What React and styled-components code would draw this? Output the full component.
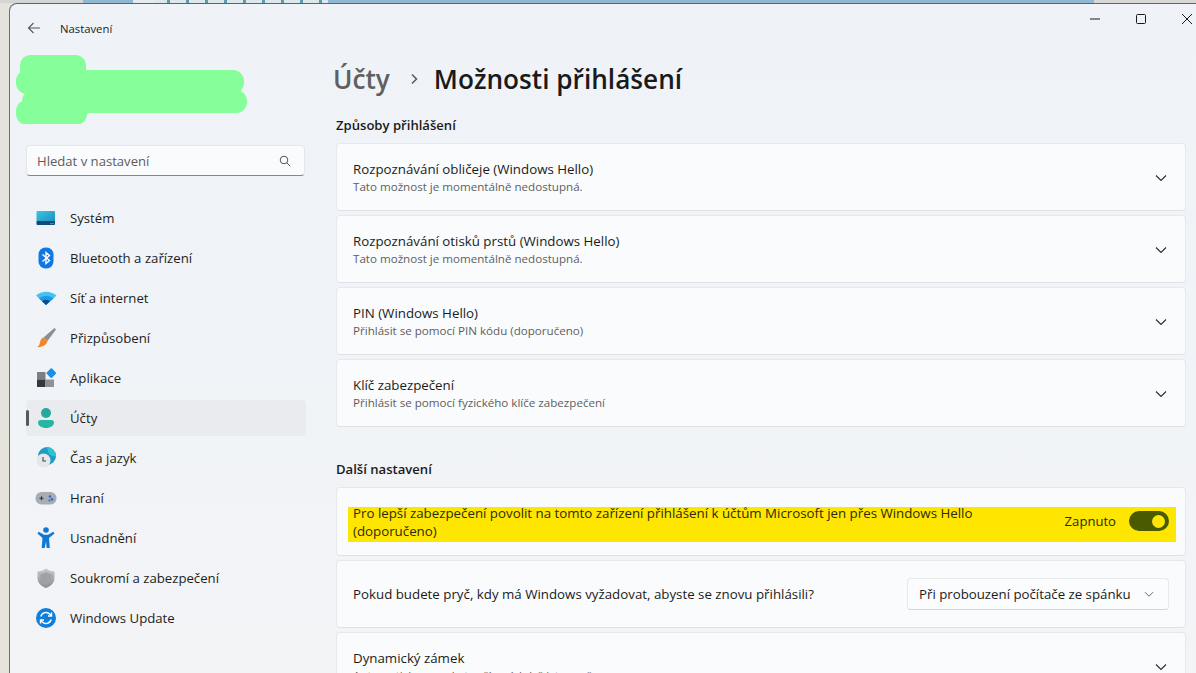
import React from 'react';
import styled, { createGlobalStyle } from 'styled-components';

const GlobalStyle = createGlobalStyle`
  html, body {
    margin: 0;
    padding: 0;
    height: 100%;
    overflow: hidden;
  }
  body {
    font-family: "Open Sans", "Liberation Sans", sans-serif;
    background: #e6e2dc;
    color: #1b1b1b;
  }
`;

const Desktop = styled.div`
  width: 1196px;
  height: 673px;
  overflow: hidden;
  display: flex;
  flex-direction: column;
`;

const WallpaperStrip = styled.div`
  display: flex;
  height: 3px;
  flex: none;
`;

const StripPart = styled.div`
  width: ${({ w }) => (w ? `${w}px` : 'auto')};
  flex: ${({ w }) => (w ? 'none' : '1')};
  background: ${({ c }) => c};
`;

const Window = styled.div`
  flex: 1;
  min-height: 0;
  margin-left: 9px;
  display: flex;
  background: linear-gradient(180deg, #eff3f8 0%, #f0f3f7 55%, #f3f4f6 100%);
  border-top: 1px solid #5f6468;
  border-left: 1px solid #6c7074;
  border-top-left-radius: 8px;
  overflow: hidden;
`;

const Sidebar = styled.aside`
  width: 317px;
  flex: none;
  padding-left: 16px;
  box-sizing: border-box;
`;

const TitleBar = styled.div`
  display: flex;
  align-items: center;
  height: 48px;
`;

const BackButton = styled.div`
  width: 34px;
  display: flex;
`;

const AppName = styled.span`
  font-size: 11.3px;
  color: #1c1c1c;
`;

const Redaction = styled.svg`
  display: block;
  margin-left: -10px;
  width: 236px;
  height: 72px;
`;

const SearchBox = styled.div`
  margin-top: 21px;
  width: 279px;
  height: 31px;
  box-sizing: border-box;
  display: flex;
  align-items: center;
  justify-content: space-between;
  padding: 0 13px 0 10px;
  background: #fafbfc;
  border: 1px solid #e4e6e9;
  border-bottom: 1px solid #85888b;
  border-radius: 4px;
  font-size: 13.1px;
  color: #5d5d5d;
`;

const NavList = styled.nav`
  margin-top: 24px;
  display: flex;
  flex-direction: column;
  gap: 4px;
  width: 280px;
`;

const NavItem = styled.div`
  position: relative;
  height: 36px;
  display: flex;
  align-items: center;
  gap: 12px;
  padding-left: 8px;
  border-radius: 4px;
  font-size: 13.2px;
  color: #1d1d1d;
  background: ${({ active }) => (active ? '#e9ebee' : 'transparent')};
`;

const ActiveMark = styled.span`
  position: absolute;
  left: 0;
  top: 10px;
  width: 3px;
  height: 16px;
  border-radius: 2px;
  background: #55595c;
`;

const NavIcon = styled.svg`
  width: 24px;
  height: 24px;
  flex: none;
`;

const Main = styled.main`
  flex: 1;
  min-width: 0;
  display: flex;
  flex-direction: column;
`;

const WindowControls = styled.div`
  display: flex;
  justify-content: flex-end;
  height: 32px;
  flex: none;
  margin-right: -14px;
`;

const ControlButton = styled.div`
  width: 46px;
  height: 30px;
  display: flex;
  align-items: center;
  justify-content: center;
`;

const Content = styled.div`
  padding: 0 10px 0 9px;
`;

const Breadcrumb = styled.h1`
  margin: 19px 0 0 -3px;
  height: 48px;
  display: flex;
  align-items: center;
  font-size: 26.2px;
  font-weight: 600;
  color: #1a1a1a;
  white-space: nowrap;
`;

const Crumb = styled.span`
  color: #5e6062;
`;

const CrumbSep = styled.svg`
  width: 12px;
  height: 12px;
  margin: 0 14px 0 18px;
`;

const SectionTitle = styled.h2`
  margin: ${({ first }) => (first ? '12px' : '32px')} 0 0 0;
  height: 20px;
  line-height: 20px;
  font-size: 13.1px;
  font-weight: 600;
  color: #1a1a1a;
`;

const CardStack = styled.div`
  margin-top: 8px;
  display: flex;
  flex-direction: column;
  gap: 4px;
`;

const Card = styled.div`
  height: ${({ h }) => h || 68}px;
  box-sizing: border-box;
  flex: none;
  display: flex;
  align-items: center;
  justify-content: space-between;
  padding: ${({ tight }) => (tight ? '0 9px 0 11px' : '0 16px')};
  background: #f9fbfc;
  border: 1px solid #e6e9ec;
  border-bottom-color: #dfe2e5;
  border-radius: 4px;
`;

const CardText = styled.div`
  display: flex;
  flex-direction: column;
`;

const CardTitle = styled.div`
  font-size: 13.3px;
  line-height: 18px;
  color: #1b1b1b;
`;

const CardSub = styled.div`
  font-size: 11.6px;
  line-height: 17px;
  color: #5f5f5f;
`;

const Chevron = styled.svg`
  width: 14px;
  height: 14px;
  flex: none;
  margin-right: 1px;
  margin-top: 1px;
`;

const Highlight = styled.div`
  flex: 1;
  height: 35px;
  margin-top: 6px;
  display: flex;
  align-items: center;
  justify-content: space-between;
  padding: 0 7px 0 5px;
  background: #fee600;
`;

const HighlightText = styled.div`
  width: 660px;
  margin-bottom: 6px;
  font-size: 13.3px;
  line-height: 18px;
  color: #2a2a10;
`;

const ToggleWrap = styled.div`
  display: flex;
  align-items: center;
  gap: 13px;
  margin-bottom: 7px;
  font-size: 13.1px;
  color: #2a2a10;
`;

const Toggle = styled.div`
  width: 40px;
  height: 20px;
  box-sizing: border-box;
  border-radius: 10px;
  background: #4a5a00;
  display: flex;
  align-items: center;
  justify-content: flex-end;
  padding-right: 4px;
`;

const Knob = styled.div`
  width: 13px;
  height: 13px;
  border-radius: 50%;
  background: #fee600;
`;

const Select = styled.div`
  width: 262px;
  height: 32px;
  box-sizing: border-box;
  display: flex;
  align-items: center;
  justify-content: space-between;
  padding: 0 14px 0 11px;
  background: #fbfcfd;
  border: 1px solid #e6e8ea;
  border-bottom-color: #d4d6d9;
  border-radius: 4px;
  font-size: 13.25px;
  white-space: nowrap;
  color: #1b1b1b;
`;

const SystemIcon = () => (
  <NavIcon viewBox="0 0 24 24">
    <defs>
      <linearGradient id="sys" x1="0" y1="0" x2="1" y2="1">
        <stop offset="0" stopColor="#3cc6dc" />
        <stop offset="1" stopColor="#1a8fc4" />
      </linearGradient>
    </defs>
    <rect x="2.500" y="5" width="18.500" height="11" rx="1" fill="url(#sys)" />
    <rect x="2.500" y="15" width="18.500" height="4" rx="1" fill="#0f4c78" />
    <circle cx="17" cy="17.600" r=".6" fill="#8cc" />
    <circle cx="19" cy="17.600" r=".6" fill="#8cc" />
  </NavIcon>
);

const BluetoothIcon = () => (
  <NavIcon viewBox="0 0 24 24">
    <rect x="4.500" y="1.500" width="15" height="21" rx="7" fill="#0f78e6" />
    <path d="M8.500 8.500l7 6-3.500 3V6.500l3.500 3-7 6" fill="none" stroke="#fff" strokeWidth="1.400" />
  </NavIcon>
);

const WifiIcon = () => (
  <NavIcon viewBox="0 0 24 24">
    <path d="M2 9.500C8 4.500 16 4.500 22.500 9.500L12 19z" fill="#45c1f2" />
    <path d="M5 12.400C9 9 15 9 19.500 12.400L12 19z" fill="#1e9be4" />
    <path d="M8 15.200c2.400-1.800 5.600-1.800 8 0L12 19z" fill="#0b4a8e" />
  </NavIcon>
);

const BrushIcon = () => (
  <NavIcon viewBox="0 0 24 24">
    <path d="M20.500 2l1.500 1.500-8.500 11.500-4-3.500z" fill="#8a8f96" />
    <path d="M9.300 11.500l4.200 3.600c-.8 3.800-4.800 6.500-10.500 6 2.900-1.600 2.500-3.800 3.200-5.700.5-1.800 1.600-3.300 3.100-3.900z" fill="#f0862a" />
  </NavIcon>
);

const AppsIcon = () => (
  <NavIcon viewBox="0 0 24 24">
    <rect x="3" y="6" width="8.500" height="7.500" fill="#7b8087" />
    <rect x="3" y="13.500" width="8.500" height="7.500" fill="#35393e" />
    <rect x="11.500" y="13.500" width="8.500" height="7.500" fill="#8d9299" />
    <rect x="13.600" y="3.400" width="7.400" height="7.400" rx="1" transform="rotate(45 17.300 7.100)" fill="#1b8ee8" />
  </NavIcon>
);

const UserIcon = () => (
  <NavIcon viewBox="0 0 24 24">
    <circle cx="12" cy="7" r="5" fill="#25a99a" />
    <path d="M4 16.500c0-1.700 1.300-2.500 3-2.500h10c1.700 0 3 .8 3 2.500 0 3.200-3.600 5.500-8 5.500s-8-2.300-8-5.500z" fill="#27b5a4" />
  </NavIcon>
);

const ClockIcon = () => (
  <NavIcon viewBox="0 0 24 24">
    <circle cx="13" cy="10" r="9" fill="#1f9bc4" />
    <path d="M13 1a9 9 0 0 1 9 9c-4 1-8-1-9-9z" fill="#30c3cf" />
    <circle cx="9.500" cy="14.500" r="7" fill="#e6e7ea" />
    <path d="M9 11v4h3" fill="none" stroke="#44484c" strokeWidth="1.100" />
  </NavIcon>
);

const GamepadIcon = () => (
  <NavIcon viewBox="0 0 24 24">
    <rect x="1.500" y="6" width="21" height="12.500" rx="6" fill="#a7adb4" />
    <path d="M5.500 12.200h4M7.500 10.200v4" stroke="#34383c" strokeWidth="1.100" />
    <circle cx="16" cy="10.600" r="1.300" fill="#2c6fc0" />
    <circle cx="18" cy="13.400" r="1.300" fill="#2c6fc0" />
    <circle cx="15.400" cy="14.600" r="1" fill="#2c6fc0" />
  </NavIcon>
);

const AccessIcon = () => (
  <NavIcon viewBox="0 0 24 24">
    <circle cx="12" cy="4" r="2.800" fill="#0f78d4" />
    <path d="M3.500 7.600l1.200-1.800 5.300 3h4l5.300-3 1.200 1.800-5.500 4.400.8 10h-3.100L12 15.500 10.800 22H7.700l.8-10z" fill="#0f78d4" />
  </NavIcon>
);

const ShieldIcon = () => (
  <NavIcon viewBox="0 0 24 24">
    <defs>
      <linearGradient id="shield" x1="0" y1="0" x2="0" y2="1">
        <stop offset="0" stopColor="#c6c9cd" />
        <stop offset="1" stopColor="#8a8e94" />
      </linearGradient>
    </defs>
    <path d="M12 2.500c2.600 2 5.400 3 8.500 3v6.500c0 4.800-3.200 8.200-8.500 10-5.300-1.800-8.500-5.200-8.500-10V5.500c3.100 0 5.900-1 8.500-3z" fill="url(#shield)" />
    <path d="M12 6c1.800 1.200 3.700 1.900 5.500 2v4c0 3.300-2.200 5.600-5.500 6.900-3.300-1.300-5.500-3.600-5.500-6.900V8c1.800-.1 3.700-.8 5.500-2z" fill="#9ea2a8" />
  </NavIcon>
);

const UpdateIcon = () => (
  <NavIcon viewBox="0 0 24 24">
    <circle cx="12" cy="12" r="10" fill="#0f7fdc" />
    <path d="M6.800 10.500a5.400 5.400 0 0 1 9.200-2.200l1.500 1.500M17.500 6.500v3.500H14M17.200 13.500a5.400 5.400 0 0 1-9.200 2.200l-1.500-1.500M6.500 17.500V14H10" fill="none" stroke="#fff" strokeWidth="1.400" />
  </NavIcon>
);

const navItems = [
  { label: 'Systém', Icon: SystemIcon },
  { label: 'Bluetooth a zařízení', Icon: BluetoothIcon },
  { label: 'Síť a internet', Icon: WifiIcon },
  { label: 'Přizpůsobení', Icon: BrushIcon },
  { label: 'Aplikace', Icon: AppsIcon },
  { label: 'Účty', Icon: UserIcon, active: true },
  { label: 'Čas a jazyk', Icon: ClockIcon },
  { label: 'Hraní', Icon: GamepadIcon },
  { label: 'Usnadnění', Icon: AccessIcon },
  { label: 'Soukromí a zabezpečení', Icon: ShieldIcon },
  { label: 'Windows Update', Icon: UpdateIcon },
];

const signInCards = [
  { title: 'Rozpoznávání obličeje (Windows Hello)', sub: 'Tato možnost je momentálně nedostupná.' },
  { title: 'Rozpoznávání otisků prstů (Windows Hello)', sub: 'Tato možnost je momentálně nedostupná.' },
  { title: 'PIN (Windows Hello)', sub: 'Přihlásit se pomocí PIN kódu (doporučeno)' },
  { title: 'Klíč zabezpečení', sub: 'Přihlásit se pomocí fyzického klíče zabezpečení' },
];

const ChevronDown = () => (
  <Chevron viewBox="0 0 14 14">
    <path d="M2 4.500l5 5 5-5" fill="none" stroke="#2a2a2a" strokeWidth="1.100" />
  </Chevron>
);

export default function App() {
  return (
    <Desktop>
      <GlobalStyle />
      <WallpaperStrip>
        <StripPart w={83} c="#d4d6d6" />
        <StripPart w={50} c="#8fb8d2" />
        <StripPart w={22} c="#e4ecf0" />
        <StripPart w={173} c="repeating-linear-gradient(90deg, #dde8ed 0 12px, #5f9aaa 12px 15px, #dde8ed 15px 19px)" />
        <StripPart w={766} c="#8fb8d2" />
        <StripPart c="#d8d8d6" />
      </WallpaperStrip>
      <Window>
        <Sidebar>
          <TitleBar>
            <BackButton>
              <svg width="16" height="16" viewBox="0 0 16 16">
                <path d="M14 8H2.500M7.500 3L2.500 8l5 5" fill="none" stroke="#55585b" strokeWidth="1.100" />
              </svg>
            </BackButton>
            <AppName>Nastavení</AppName>
          </TitleBar>
          <Redaction viewBox="0 0 236 72">
            <g fill="#86ff9a">
              <rect x="4" y="3" width="66" height="30" rx="10" />
              <rect x="0" y="18" width="228" height="24" rx="11" />
              <rect x="6" y="38" width="225" height="23" rx="11" />
              <rect x="0" y="48" width="71" height="25" rx="11" />
            </g>
          </Redaction>
          <SearchBox>
            Hledat v nastavení
            <svg width="12" height="12" viewBox="0 0 12 12">
              <circle cx="5" cy="5" r="3.800" fill="none" stroke="#555" strokeWidth="1" />
              <path d="M7.800 7.800L11.300 11.300" stroke="#555" strokeWidth="1" />
            </svg>
          </SearchBox>
          <NavList>
            {navItems.map(({ label, Icon, active }) => (
              <NavItem key={label} active={active}>
                {active && <ActiveMark />}
                <Icon />
                {label}
              </NavItem>
            ))}
          </NavList>
        </Sidebar>
        <Main>
          <WindowControls>
            <ControlButton>
              <svg width="10" height="10" viewBox="0 0 10 10">
                <path d="M0 5h10" stroke="#1a1a1a" strokeWidth="1" />
              </svg>
            </ControlButton>
            <ControlButton>
              <svg width="10" height="10" viewBox="0 0 10 10">
                <rect x=".5" y=".5" width="9" height="9" rx="1" fill="none" stroke="#1a1a1a" strokeWidth="1" />
              </svg>
            </ControlButton>
            <ControlButton>
              <svg width="10" height="10" viewBox="0 0 10 10">
                <path d="M0 0l10 10M10 0L0 10" stroke="#1a1a1a" strokeWidth="1" />
              </svg>
            </ControlButton>
          </WindowControls>
          <Content>
            <Breadcrumb>
              <Crumb>Účty</Crumb>
              <CrumbSep viewBox="0 0 12 12">
                <path d="M4 1.500L8.500 6 4 10.500" fill="none" stroke="#55585b" strokeWidth="1.500" />
              </CrumbSep>
              Možnosti přihlášení
            </Breadcrumb>
            <SectionTitle first>Způsoby přihlášení</SectionTitle>
            <CardStack>
              {signInCards.map((c) => (
                <Card key={c.title}>
                  <CardText>
                    <CardTitle>{c.title}</CardTitle>
                    <CardSub>{c.sub}</CardSub>
                  </CardText>
                  <ChevronDown />
                </Card>
              ))}
            </CardStack>
            <SectionTitle>Další nastavení</SectionTitle>
            <CardStack>
              <Card tight h={69}>
                <Highlight>
                  <HighlightText>
                    Pro lepší zabezpečení povolit na tomto zařízení přihlášení k účtům Microsoft jen přes Windows Hello (doporučeno)
                  </HighlightText>
                  <ToggleWrap>
                    Zapnuto
                    <Toggle>
                      <Knob />
                    </Toggle>
                  </ToggleWrap>
                </Highlight>
              </Card>
              <Card>
                <CardTitle>Pokud budete pryč, kdy má Windows vyžadovat, abyste se znovu přihlásili?</CardTitle>
                <Select>
                  Při probouzení počítače ze spánku
                  <svg width="10" height="10" viewBox="0 0 10 10">
                    <path d="M1 3.200l4 4 4-4" fill="none" stroke="#666" strokeWidth="1" />
                  </svg>
                </Select>
              </Card>
              <Card>
                <CardText>
                  <CardTitle>Dynamický zámek</CardTitle>
                  <CardSub>Automaticky zamykat zařízení, když jste pryč</CardSub>
                </CardText>
                <ChevronDown />
              </Card>
            </CardStack>
          </Content>
        </Main>
      </Window>
    </Desktop>
  );
}
